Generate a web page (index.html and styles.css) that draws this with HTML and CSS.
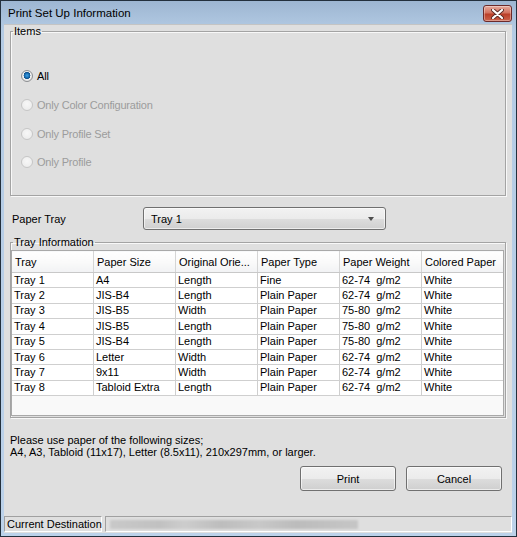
FILE: index.html
```html
<!DOCTYPE html>
<html>
<head>
<meta charset="utf-8">
<link rel="stylesheet" href="styles.css">
</head>
<body>
<div class="window">
  <div class="titlebar">
    <span class="title">Print Set Up Information</span>
    <span class="close"><svg width="13" height="10" viewBox="0 0 13 10"><path d="M2 1 L11 9 M11 1 L2 9" stroke="#5a2a26" stroke-width="4" stroke-linecap="round"/><path d="M2 1 L11 9 M11 1 L2 9" stroke="#ffffff" stroke-width="2.2" stroke-linecap="round"/></svg></span>
  </div>
  <div class="client">
    <fieldset class="group items">
      <legend>Items</legend>
      <div class="radios">
        <label class="radio checked"><span class="dot"></span>All</label>
        <label class="radio disabled"><span class="dot"></span>Only Color Configuration</label>
        <label class="radio disabled"><span class="dot"></span>Only Profile Set</label>
        <label class="radio disabled"><span class="dot"></span>Only Profile</label>
      </div>
    </fieldset>

    <div class="tray-row">
      <span class="tray-label">Paper Tray</span>
      <div class="combo"><span>Tray 1</span><span class="arrow"></span></div>
    </div>

    <fieldset class="group trayinfo">
      <legend>Tray Information</legend>
      <div class="grid">
        <table>
          <colgroup><col><col><col><col><col><col></colgroup>
          <thead>
            <tr><th>Tray</th><th>Paper Size</th><th>Original Orie...</th><th>Paper Type</th><th>Paper Weight</th><th>Colored Paper</th></tr>
          </thead>
          <tbody>
            <tr><td>Tray 1</td><td>A4</td><td>Length</td><td>Fine</td><td>62-74&nbsp; g/m2</td><td>White</td></tr>
            <tr><td>Tray 2</td><td>JIS-B4</td><td>Length</td><td>Plain Paper</td><td>62-74&nbsp; g/m2</td><td>White</td></tr>
            <tr><td>Tray 3</td><td>JIS-B5</td><td>Width</td><td>Plain Paper</td><td>75-80&nbsp; g/m2</td><td>White</td></tr>
            <tr><td>Tray 4</td><td>JIS-B5</td><td>Length</td><td>Plain Paper</td><td>75-80&nbsp; g/m2</td><td>White</td></tr>
            <tr><td>Tray 5</td><td>JIS-B4</td><td>Length</td><td>Plain Paper</td><td>75-80&nbsp; g/m2</td><td>White</td></tr>
            <tr><td>Tray 6</td><td>Letter</td><td>Width</td><td>Plain Paper</td><td>62-74&nbsp; g/m2</td><td>White</td></tr>
            <tr><td>Tray 7</td><td>9x11</td><td>Width</td><td>Plain Paper</td><td>62-74&nbsp; g/m2</td><td>White</td></tr>
            <tr><td>Tray 8</td><td>Tabloid Extra</td><td>Length</td><td>Plain Paper</td><td>62-74&nbsp; g/m2</td><td>White</td></tr>
          </tbody>
        </table>
      </div>
    </fieldset>

    <div class="note">
      <div>Please use paper of the following sizes;</div>
      <div>A4, A3, Tabloid (11x17), Letter (8.5x11), 210x297mm, or larger.</div>
    </div>

    <div class="buttons">
      <button class="btn">Print</button>
      <button class="btn">Cancel</button>
    </div>

    <div class="status">
      <div class="cell label">Current Destination</div>
      <div class="cell dest"><span class="blur"></span></div>
    </div>
  </div>
</div>
</body>
</html>
```

FILE: styles.css
```css
* { box-sizing: border-box; }
html, body { margin: 0; padding: 0; }
body {
  width: 517px;
  height: 537px;
  font-family: "Liberation Sans", Arial, sans-serif;
  font-size: 11px;
  color: #000;
  background: #fff;
}
.window {
  width: 517px;
  height: 537px;
  border: 1px solid #23303d;
  background: linear-gradient(#9db6d2, #b4cbe4 30px, #bcd2ea);
  padding: 0 4px 3px 3px;
  display: flex;
  flex-direction: column;
}
.titlebar {
  height: 23px;
  flex: none;
  display: flex;
  align-items: center;
  justify-content: space-between;
  padding-left: 4px;
}
.title {
  font-size: 11.5px;
  font-family: "Liberation Sans", Arial, sans-serif;
  color: #000;
  margin-top: 1px;
}
.close {
  width: 29px;
  height: 17px;
  margin-top: 2px;
  border: 1px solid #6b2a2a;
  border-radius: 3px;
  background: linear-gradient(#e6ab9e, #d3725f 45%, #bb3f29 55%, #cc634c);
  box-shadow: inset 0 0 0 1px rgba(255,255,255,0.35);
  display: flex;
  align-items: center;
  justify-content: center;
}
.client {
  flex: 1;
  background: #dfdfdf;
  border-top: 1px solid #c4c4c4;
  display: flex;
  flex-direction: column;
}
.group {
  margin: 0 6px;
  padding: 0;
  border: 1px solid #a3a3a3;
  box-shadow: 1px 1px 0 #f8f8f8, inset 1px 1px 0 #f8f8f8;
  min-width: 0;
}
.group legend {
  padding: 0 1px;
  margin-left: 2px;
  line-height: 13px;
  font-size: 11px;
}
.items {
  height: 171px;
}
.radios {
  display: flex;
  flex-direction: column;
  padding: 24px 0 0 9px;
}
.radio {
  display: flex;
  align-items: center;
  height: 28.7px;
  gap: 4px;
  letter-spacing: -0.2px;
}
.radio .dot {
  width: 12px;
  height: 12px;
  border-radius: 50%;
  border: 1px solid #8d8f92;
  background: radial-gradient(circle at 50% 40%, #f6f6f6, #dcdcdc);
  margin-left: 1px;
}
.radio.checked .dot {
  background: radial-gradient(circle at 50% 45%, #3fa3e8 0, #1a6fb3 2.2px, #0f4f88 3.3px, #f4f4f4 3.6px, #dadada 6px);
}
.radio.disabled { color: #9c9c9c; }
.radio.disabled .dot {
  border-color: #c6c6c6;
  background: radial-gradient(circle at 50% 40%, #f7f7f7, #e9e9e9);
}
.tray-row {
  display: flex;
  align-items: center;
  margin-top: 11px;
  height: 23px;
}
.tray-label {
  width: 139px;
  padding-left: 8px;
}
.combo {
  width: 243px;
  height: 23px;
  border: 1px solid #707070;
  border-radius: 3px;
  background: linear-gradient(#f2f2f2, #ebebeb 50%, #dddddd 51%, #cfcfcf);
  box-shadow: inset 0 0 0 1px rgba(255,255,255,0.6);
  display: flex;
  align-items: center;
  justify-content: space-between;
  padding: 0 11px 0 7px;
}
.arrow {
  width: 0;
  height: 0;
  border-left: 3.5px solid transparent;
  border-right: 3.5px solid transparent;
  border-top: 4px solid #4d4d4d;
}
.trayinfo {
  margin-top: 6px;
  height: 182px;
  padding: 1px 1px 1px 0;
}
.grid {
  height: 166px;
  border: 1px solid #a9a9a9;
  background: #f9f9f9;
  overflow: hidden;
}
table {
  width: 492px;
  border-collapse: collapse;
  table-layout: fixed;
  margin: -1px 0 0 -1px;
}
col { width: 82px; }
th {
  height: 22px;
  font-weight: normal;
  text-align: left;
  padding: 0 3px;
  background: linear-gradient(#ffffff, #fafafa 50%, #f1f2f4);
  border: 1px solid #d5d5d5;
  border-bottom-color: #c8c8c8;
  white-space: nowrap;
  overflow: hidden;
}
td {
  height: 15.4px;
  line-height: 13px;
  padding: 0 2px;
  background: #fff;
  border: 1px solid #cfcfcf;
  white-space: nowrap;
  overflow: hidden;
}
.note {
  margin: 16px 0 0 6px;
  line-height: 12px;
}
.buttons {
  display: flex;
  justify-content: flex-end;
  gap: 10px;
  margin-top: 8px;
  padding-right: 10px;
}
.btn {
  width: 96px;
  height: 25px;
  font-family: "Liberation Sans", Arial, sans-serif;
  font-size: 11px;
  color: #000;
  border: 1px solid #707070;
  border-radius: 3px;
  background: linear-gradient(#f2f2f2, #ebebeb 50%, #dddddd 51%, #cfcfcf);
  box-shadow: inset 0 0 0 1px rgba(255,255,255,0.6);
  padding: 0;
}
.status {
  margin-top: auto;
  display: flex;
  gap: 3px;
  height: 17px;
}
.cell {
  height: 16px;
  border: 1px solid;
  border-color: #a0a0a0 #ffffff #ffffff #a0a0a0;
  display: flex;
  align-items: center;
}
.cell.label {
  width: 98px;
  padding-left: 2px;
  white-space: nowrap;
}
.cell.dest {
  flex: 1;
  padding-left: 4px;
}
.blur {
  display: block;
  width: 248px;
  height: 9px;
  background: linear-gradient(90deg, #c9c9c9, #c1c1c1 20%, #cdcdcd 30%, #bdbdbd 45%, #c8c8c8 60%, #bcbcbc 75%, #c6c6c6);
  filter: blur(1px);
}
```
